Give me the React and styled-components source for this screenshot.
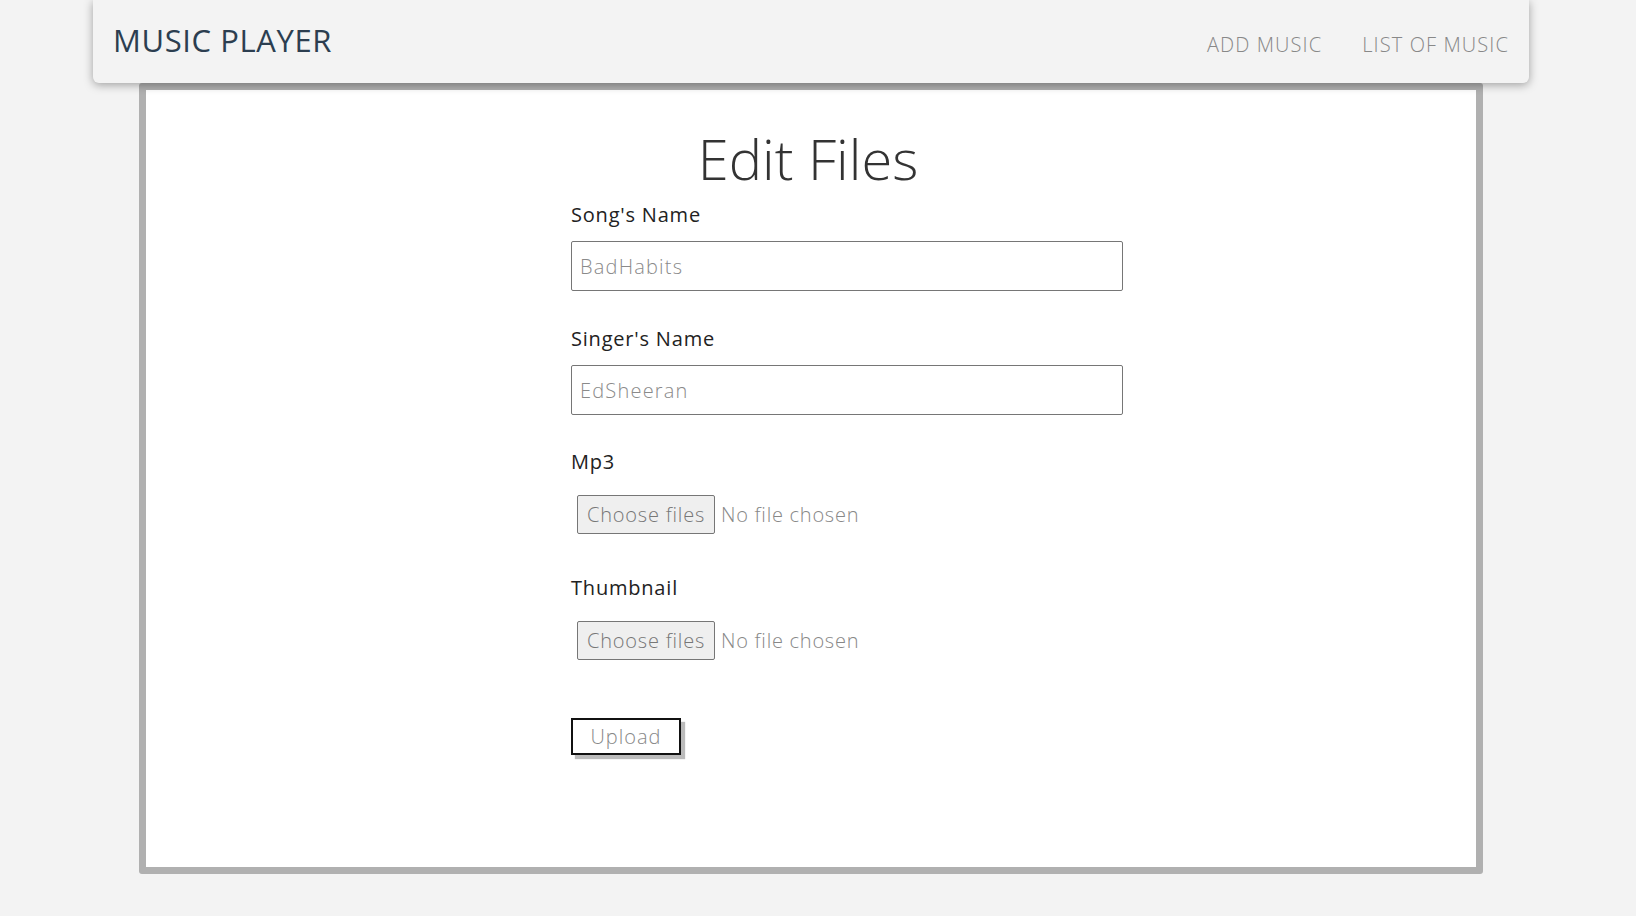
import React from 'react';
import styled, { createGlobalStyle } from 'styled-components';

const GlobalStyle = createGlobalStyle`
  html, body {
    margin: 0;
    padding: 0;
    background-color: #f3f3f3;
    font-family: 'Open Sans', 'Liberation Sans', sans-serif;
  }
  * {
    box-sizing: border-box;
  }
`;

function App() {
  return (
    <>
      <GlobalStyle />
      <Page>
        <NavBar>
          <Brand>MUSIC PLAYER</Brand>
          <NavLinks>
            <NavLink>ADD MUSIC</NavLink>
            <NavLink>LIST OF MUSIC</NavLink>
          </NavLinks>
        </NavBar>
        <Card>
          <Title>Edit Files</Title>
          <Form>
            <Field>
              <Label>Song's Name</Label>
              <TextInput defaultValue="BadHabits" />
            </Field>
            <Field gap={36}>
              <Label>Singer's Name</Label>
              <TextInput defaultValue="EdSheeran" />
            </Field>
            <Field gap={35}>
              <Label>Mp3</Label>
              <FileInput />
            </Field>
            <Field gap={42}>
              <Label>Thumbnail</Label>
              <FileInput />
            </Field>
            <UploadButton>Upload</UploadButton>
          </Form>
        </Card>
      </Page>
    </>
  );
}

export default App;

function FileInput() {
  return (
    <FileRow>
      <ChooseButton>Choose files</ChooseButton>
      <FileText>No file chosen</FileText>
    </FileRow>
  );
}

const Page = styled.div`
  width: 1622px;
  min-height: 916px;
  display: flex;
  flex-direction: column;
  align-items: center;
`;

const NavBar = styled.nav`
  position: relative;
  z-index: 2;
  display: flex;
  justify-content: space-between;
  align-items: flex-end;
  width: 1436px;
  height: 83px;
  padding: 0 20px 27px 20px;
  background-color: #f3f3f3;
  border-radius: 0 0 6px 6px;
  box-shadow: 0px 2px 10px rgba(0, 0, 0, 0.35);
`;

const Brand = styled.div`
  font-size: 31px;
  font-weight: 400;
  line-height: 1;
  letter-spacing: 0.6px;
  color: #2c3e50;
`;

const NavLinks = styled.div`
  display: flex;
  gap: 40px;
`;

const NavLink = styled.a`
  font-size: 20px;
  font-weight: 300;
  line-height: 1;
  letter-spacing: 1.1px;
  color: #888;
  cursor: pointer;
  margin-bottom: 1px;
`;

const Card = styled.div`
  width: 1344px;
  height: 791px;
  background-color: #fff;
  border: 7px solid #b0b0b0;
  border-radius: 3px;
  padding-top: 40px;
`;

const Title = styled.h1`
  margin: 0 0 0 -6px;
  text-align: center;
  font-size: 56px;
  font-weight: 300;
  line-height: 56px;
  color: #333;
`;

const Form = styled.div`
  display: flex;
  flex-direction: column;
  align-items: flex-start;
  width: 552px;
  margin: 17px 0 0 425px;
`;

const Field = styled.div`
  display: flex;
  flex-direction: column;
  width: 100%;
  margin-top: ${({ gap }) => gap || 0}px;
`;

const Label = styled.label`
  font-size: 20px;
  font-weight: 400;
  line-height: 24px;
  letter-spacing: 0.8px;
  color: #222;
  margin-bottom: 14px;
`;

const TextInput = styled.input`
  width: 100%;
  height: 50px;
  padding: 0 8px;
  border: 1px solid #767676;
  border-radius: 2px;
  font-family: 'Open Sans', 'Liberation Sans', sans-serif;
  font-size: 20px;
  font-weight: 300;
  letter-spacing: 1.2px;
  color: #8a8a8a;
  outline: none;
`;

const FileRow = styled.div`
  display: flex;
  align-items: center;
  gap: 6px;
  margin: 7px 0 0 6px;
`;

const ChooseButton = styled.button`
  height: 39px;
  width: 138px;
  padding: 0;
  background-color: #efefef;
  border: 1px solid #767676;
  border-radius: 2px;
  font-family: 'Open Sans', 'Liberation Sans', sans-serif;
  font-size: 20px;
  font-weight: 300;
  letter-spacing: 0.8px;
  color: #777;
  cursor: pointer;
`;

const FileText = styled.span`
  font-size: 20px;
  font-weight: 300;
  letter-spacing: 0.75px;
  color: #888;
`;

const UploadButton = styled.button`
  margin-top: 58px;
  width: 110px;
  height: 37px;
  padding: 0;
  background-color: #fff;
  border: 2px solid #111;
  box-shadow: 4px 4px 1px #bbb;
  font-family: 'Open Sans', 'Liberation Sans', sans-serif;
  font-size: 20px;
  font-weight: 300;
  letter-spacing: 1px;
  color: #888;
  cursor: pointer;
`;
